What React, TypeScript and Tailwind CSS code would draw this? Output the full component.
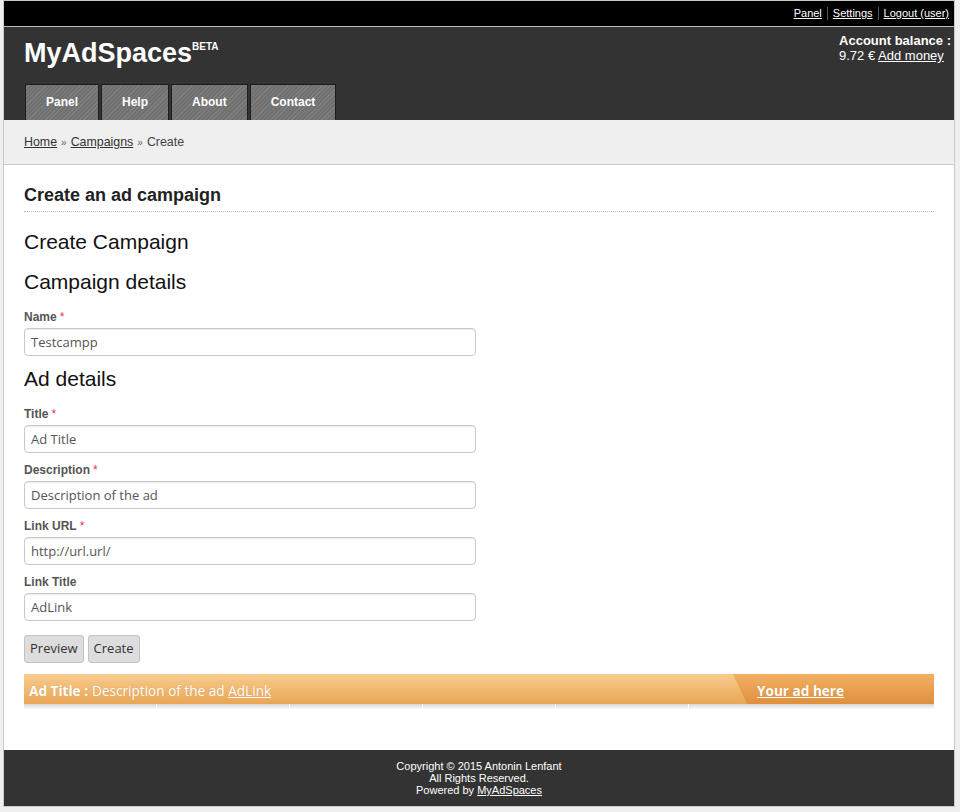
const tabs = ['Panel', 'Help', 'About', 'Contact'];

function Field({ label, value, required, className = '' }: { label: string; value: string; required?: boolean; className?: string }) {
  return (
    <div className={className}>
      <div className="text-[12px] font-bold leading-[15px] text-[#555]">
        {label}
        {required && <span className="ml-[3px] font-normal text-[#e3324f]">*</span>}
      </div>
      <input
        readOnly
        value={value}
        className="mt-[3px] block h-[28px] w-[452px] rounded-[4px] border border-[#c8c8c8] bg-white px-[6px] font-['Open_Sans',sans-serif] text-[13px] text-[#555] shadow-[inset_0_1px_1px_rgba(0,0,0,0.08)] outline-none"
      />
    </div>
  );
}

export default function App() {
  return (
    <div className="min-h-[812px] bg-[#efefef] font-['Liberation_Sans',Arial,sans-serif]">
      <div className="ml-[3px] w-[952px] border border-[#c8c8c8]">
        {/* top bar */}
        <div className="flex h-[26px] items-center justify-end border-b border-[#bdbdbd] bg-black pr-[5px] text-[11px] text-white">
          <a className="underline">Panel</a>
          <span className="mx-[5px] h-[13px] w-px bg-[#555]" />
          <a className="underline">Settings</a>
          <span className="mx-[5px] h-[13px] w-px bg-[#555]" />
          <a className="underline">Logout (user)</a>
        </div>

        {/* header */}
        <div className="flex h-[93px] justify-between bg-[#333] pl-[20px] pr-[3px]">
          <div className="pt-[10px]">
            <div className="text-[27px] font-bold leading-[32px] text-white">
              MyAdSpaces<sup className="relative -top-[12px] text-[10px] font-bold">BETA</sup>
            </div>
            <div className="ml-[1px] mt-[15px] flex gap-[2px]">
              {tabs.map(t => (
                <div
                  key={t}
                  className="flex h-[36px] items-center border-x border-t border-[#1c1c1c] bg-[repeating-linear-gradient(135deg,#717171_0px,#717171_2px,#7e7e7e_2px,#7e7e7e_3px)] px-[20px] pb-[1px] text-[12px] font-bold text-white"
                >
                  {t}
                </div>
              ))}
            </div>
          </div>
          <div className="pt-[6px] text-[13px] leading-[15px] text-white">
            <div className="font-bold">Account balance :</div>
            <div>
              9.72 € <a className="underline">Add money</a>
            </div>
          </div>
        </div>

        {/* breadcrumb */}
        <div className="flex h-[45px] items-center border-b border-[#cccccc] bg-[#efefef] px-[20px] text-[12.4px] text-[#444]">
          <a className="text-[#333] underline">Home</a>
          <span className="mx-[4px] text-[10px] text-[#666]">»</span>
          <a className="text-[#333] underline">Campaigns</a>
          <span className="mx-[4px] text-[10px] text-[#666]">»</span>
          <span>Create</span>
        </div>

        {/* content */}
        <div className="bg-white px-[20px] pb-[41px] pt-[20px] text-[#222]">
          <h2 className="border-b border-dotted border-[#bbb] pb-[6px] text-[18px] font-bold leading-[20px]">
            Create an ad campaign
          </h2>
          <h3 className="mt-[18px] text-[21px] leading-[24px] text-[#111]">Create Campaign</h3>
          <h3 className="mt-[16px] text-[21px] leading-[24px] text-[#111]">Campaign details</h3>
          <Field className="mt-[16px]" label="Name" value="Testcampp" required />
          <h3 className="mt-[11px] text-[21px] leading-[24px] text-[#111]">Ad details</h3>
          <Field className="mt-[16px]" label="Title" value="Ad Title" required />
          <Field className="mt-[10px]" label="Description" value="Description of the ad" required />
          <Field className="mt-[10px]" label="Link URL" value="http://url.url/" required />
          <Field className="mt-[10px]" label="Link Title" value="AdLink" />

          <div className="mt-[14px] flex gap-[4px] font-['Open_Sans',sans-serif] text-[13px] text-[#333]">
            <button className="h-[28px] rounded-[3px] border border-[#c3c3c3] bg-[#dddddd] px-[5px]">Preview</button>
            <button className="h-[28px] rounded-[3px] border border-[#c3c3c3] bg-[#dddddd] px-[5px]">Create</button>
          </div>

          {/* ad bar */}
          <div className="mt-[11px]">
            <div className="flex h-[30px] bg-[linear-gradient(to_bottom,#f8cc8f,#e9a655)] font-['Open_Sans',sans-serif] text-[13.6px] text-white [text-shadow:0_0_1px_rgba(150,80,0,0.3)]">
              <div className="flex flex-1 items-center pl-[5px] pt-[5px]">
                <b className="mr-[4px]">Ad Title :</b> Description of the ad&nbsp;<a className="underline">AdLink</a>
              </div>
              <div className="flex w-[201px] items-center bg-[linear-gradient(to_bottom,#f2b063,#df903f)] pl-[24px] pt-[5px] font-bold [clip-path:polygon(0_0,100%_0,100%_100%,14px_100%)]">
                <a className="underline">Your ad here</a>
              </div>
            </div>
            <div className="flex h-[5px] bg-[linear-gradient(to_bottom,#d6d6d6,#fbfbfb)]">
              <div className="w-[133px] border-r border-white" />
              <div className="w-[133px] border-r border-white" />
              <div className="w-[133px] border-r border-white" />
              <div className="w-[133px] border-r border-white" />
              <div className="w-[133px] border-r border-white" />
              <div className="flex-1" />
            </div>
          </div>
        </div>

        {/* footer */}
        <div className="h-[56px] bg-[#333] pt-[10px] text-center text-[11px] leading-[12px] text-white">
          <div>Copyright © 2015 Antonin Lenfant</div>
          <div>All Rights Reserved.</div>
          <div>
            Powered by <a className="underline">MyAdSpaces</a>
          </div>
        </div>
      </div>
    </div>
  );
}
